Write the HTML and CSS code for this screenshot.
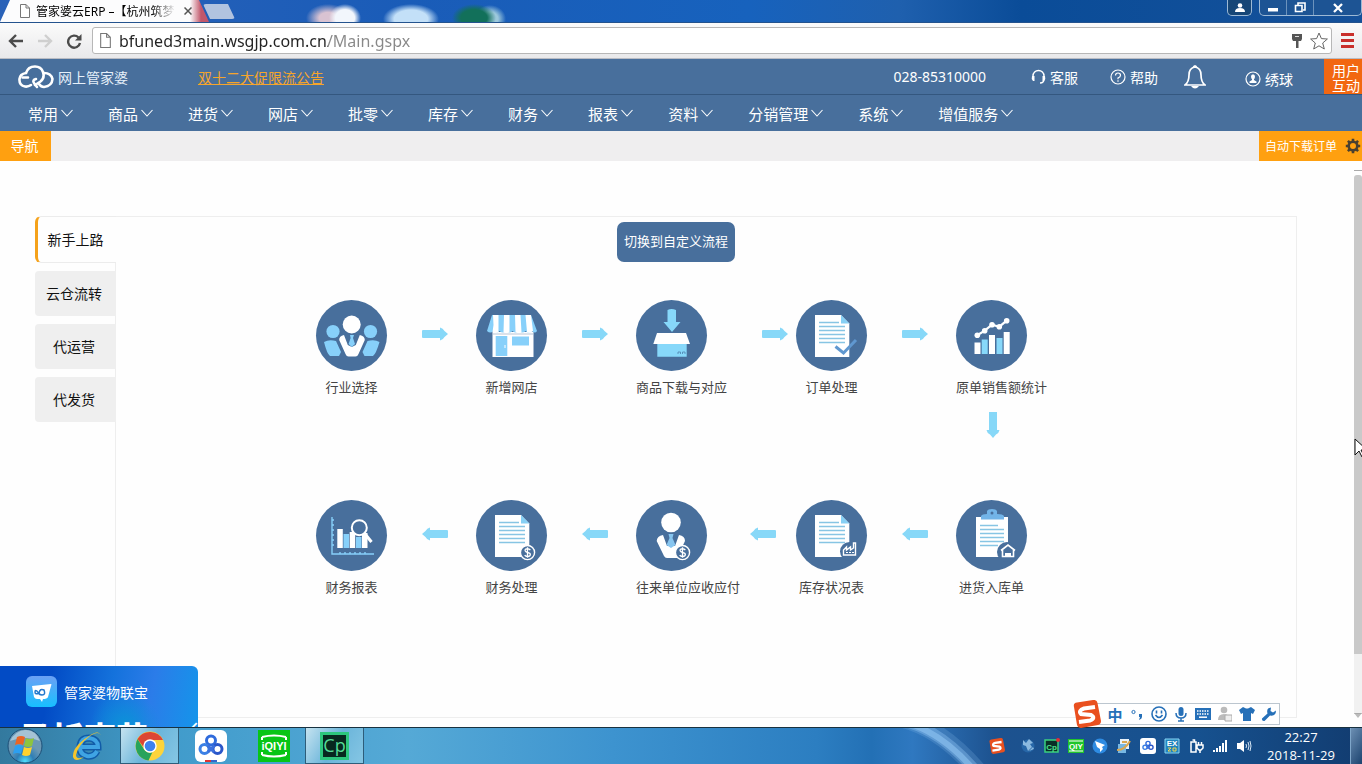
FILE: index.html
```html
<!DOCTYPE html>
<html lang="zh-CN">
<head>
<meta charset="utf-8">
<title>管家婆云ERP</title>
<link rel="stylesheet" href="styles.css">
</head>
<body>
<svg class="defs" aria-hidden="true">
  <symbol id="chev" viewBox="0 0 12 8"><path d="M.5 1 6 7 11.500 1" fill="none" stroke="currentColor" stroke-width="1.100"/></symbol>
  <symbol id="arrow" viewBox="0 0 26 14"><path d="M1 3h17V.5q3 .5 4.500 3.500L26 7l-3.500 3Q21 13 18 13.500V11H1Q0 11 0 10V4q0-1 1-1z" fill="#87d8f8"/></symbol>
  <symbol id="page" viewBox="0 0 10 14"><path d="M.5.5h5.500l3.500 3.500v9.500h-9zM6 .5V4h3.500" fill="#fff" stroke="#777"/></symbol>
  <symbol id="sogou" viewBox="0 0 28 28"><path d="M1 7Q0 3 4 2.500L20 0q4-.5 4.500 3L28 21q0 3-3 4L8 28q-3 0-4-3z" fill="#e9501f"/><path d="M22 7 11 8.500q-6 2-3 5.500l10 1q5 3-1 5.500L6 22" fill="none" stroke="#fff" stroke-width="4"/></symbol>
  <symbol id="cloud3" viewBox="0 0 26 22"><g fill="none" stroke-width="3"><circle cx="13" cy="6.500" r="4.500" stroke="#2f6bdc"/><circle cx="6.500" cy="15" r="4.500" stroke="#3b80e5"/><circle cx="19.500" cy="15" r="4.500" stroke="#2b57c9"/><path d="m9.500 11.500 6.500 6.500m.500-6.500L10 18" stroke="#3b70dd"/></g></symbol>
  <symbol id="doc" viewBox="0 0 71 71"><path d="M19 15h26l8.300 8.500V57H19z" fill="#fff"/><path d="M45 15v8.500h8.300z" fill="#87d0f5"/><path d="M23 22.500h20M23 26.500h26M23 30.500h26M23 34.500h26M23 38.500h26M23 42.500h26" stroke="#87c5e4" stroke-width="1.300"/></symbol>
  <symbol id="coin" viewBox="0 0 18 18"><circle cx="9" cy="9" r="7.500" fill="#486f9c" stroke="#fff" stroke-width="1.500"/><path d="M12 6.500Q11 5 9 5 6 5 6.500 7.200 7 8.500 9 9q3 .5 3 2.200 0 2-3 2-2 0-3-1.500M9 3.500v11" fill="none" stroke="#fff" stroke-width="1.400"/></symbol>
</svg>

<header class="titlebar">
  <div class="tab"><svg class="tab-page"><use href="#page"/></svg><span class="tab-title">管家婆云ERP –【杭州筑梦</span><button class="tab-close" aria-label="关闭标签页"><svg viewBox="0 0 8 8" width="8" height="8"><path d="m.5.5 7 7m0-7-7 7" stroke="#555" stroke-width="1.500"/></svg></button></div>
  <button class="new-tab" aria-label="新标签页"></button>
  <div class="win">
    <button class="win-user" aria-label="用户"><svg viewBox="0 0 12 10" width="12" height="10"><circle cx="6" cy="2.500" r="2.300" fill="#fff"/><path d="M1 9q0-4 5-4t5 4z" fill="#fff"/></svg></button>
    <div class="win-group">
      <button aria-label="最小化"><svg viewBox="0 0 12 10" width="12" height="10"><path d="M1 5h10v3.500H1z" fill="#fff"/></svg></button>
      <button aria-label="还原"><svg viewBox="0 0 12 11" width="12" height="11"><path d="M4 3V1h7v7H9M1.500 3.500H8v6H1.500z" fill="none" stroke="#fff" stroke-width="1.600"/></svg></button>
      <button class="win-x" aria-label="关闭"><svg viewBox="0 0 12 10" width="12" height="10"><path d="m2 1 8 8m0-8L2 9" stroke="#fff" stroke-width="2.300"/></svg></button>
    </div>
  </div>
</header>

<div class="toolbar">
  <button aria-label="后退"><svg viewBox="0 0 16 14" width="16" height="14"><path d="M15 7H2m6-6L2 7l6 6" fill="none" stroke="#4b4b4b" stroke-width="2.400"/></svg></button>
  <button aria-label="前进"><svg viewBox="0 0 16 14" width="16" height="14"><path d="M1 7h13M8 1l6 6-6 6" fill="none" stroke="#cfcfcf" stroke-width="2.400"/></svg></button>
  <button aria-label="刷新"><svg viewBox="0 0 16 16" width="16" height="16"><path d="M12.500 4.500A6 6 0 1 0 14 10" fill="none" stroke="#4b4b4b" stroke-width="2.400"/><path d="M15.500 1v6.500H9z" fill="#4b4b4b"/></svg></button>
  <div class="address">
    <svg class="addr-page"><use href="#page"/></svg>
    <input class="url" type="text" aria-label="地址" value="bfuned3main.wsgjp.com.cn/Main.gspx">
    <svg viewBox="0 0 10 14" width="10" height="14"><path d="M0 0h10v5L9 7H6.500v7H4V7H1L0 5z" fill="#555"/><path d="M3 2.500h4" stroke="#ddd"/></svg>
    <svg viewBox="0 0 18 18" width="18" height="18"><path d="m9 1 2.400 5.600 6 .4-4.700 4 1.600 6L9 13.800 3.700 17l1.600-6L.6 7l6-.4z" fill="#fff" stroke="#666"/></svg>
  </div>
  <button class="menu" aria-label="菜单"><i></i><i></i><i></i></button>
</div>

<div class="topbar">
  <svg viewBox="0 0 36 24" width="36" height="24"><g fill="none" stroke="#fff" stroke-width="2.600" stroke-linecap="round"><path d="M13 20q-3 2-6 1.500Q1 20.500 1.500 14 2 9 8 8q2-6.500 9-6.500 6 0 8 5.500 2 6-2.500 9.500L17 20"/><path d="M10 12.500H4.500M19 22l-3-4q-2-3 2-4M26 8q7 0 8.500 6-.5 7-8.500 8-3 0-5-3"/></g></svg>
  <span class="brand">网上管家婆</span>
  <a class="notice" href="#">双十二大促限流公告</a>
  <span class="phone">028-85310000</span>
  <a class="top-link service" href="#"><svg viewBox="0 0 15 16" width="15" height="16"><path d="M2 9V7a5.500 5.500 0 0 1 11 0v3q0 4-4 4" fill="none" stroke="#fff" stroke-width="1.400"/><path d="M1 7h2.500v5H2Q0 10 1 7zm10.500 0H14q1 3-1 5h-1.500z" fill="#fff"/></svg>客服</a>
  <a class="top-link help" href="#"><svg viewBox="0 0 16 16" width="16" height="16"><g fill="none" stroke="#fff" stroke-width="1.200"><circle cx="8" cy="8" r="7"/><path d="M5.500 6.500Q5.500 4 8 4t2.500 2.200Q10.500 8 8 9v1.200M8 11.300v1.400"/></g></svg>帮助</a>
  <button class="bell" aria-label="消息"><svg viewBox="0 0 22 26" width="22" height="26"><path d="M11 3Q5 4 5 11q0 7-4 10h20q-4-3-4-10 0-7-6-8z" fill="none" stroke="#fff" stroke-width="1.700"/><path d="M8 4q3-6 6 0M7 22q4 5 8 0z" fill="#fff"/></svg></button>
  <a class="top-link user" href="#"><svg viewBox="0 0 16 16" width="16" height="16"><circle cx="8" cy="8" r="7" fill="none" stroke="#fff" stroke-width="1.200"/><ellipse cx="8" cy="5.800" rx="2" ry="2.500" fill="#fff"/><path d="M4.500 12v-1.500Q6 9.500 7 9V8h2v1q1 .5 2.500 1.500V12z" fill="#fff"/></svg>绣球</a>
  <a class="interact" href="#"><span>用户</span><span>互动</span></a>
</div>

<nav class="nav">
  <a href="#">常用<svg><use href="#chev"/></svg></a>
  <a href="#">商品<svg><use href="#chev"/></svg></a>
  <a href="#">进货<svg><use href="#chev"/></svg></a>
  <a href="#">网店<svg><use href="#chev"/></svg></a>
  <a href="#">批零<svg><use href="#chev"/></svg></a>
  <a href="#">库存<svg><use href="#chev"/></svg></a>
  <a href="#">财务<svg><use href="#chev"/></svg></a>
  <a href="#">报表<svg><use href="#chev"/></svg></a>
  <a href="#">资料<svg><use href="#chev"/></svg></a>
  <a href="#">分销管理<svg><use href="#chev"/></svg></a>
  <a href="#">系统<svg><use href="#chev"/></svg></a>
  <a href="#">增值服务<svg><use href="#chev"/></svg></a>
</nav>

<div class="tabs">
  <button class="nav-tab">导航</button>
  <button class="auto">自动下载订单<svg viewBox="0 0 16 16" width="16" height="16"><circle cx="8" cy="8" r="4.300" fill="none" stroke="#4a4030" stroke-width="2.600"/><path d="M8 .8v2.700m0 9v2.700M.8 8h2.700m9 0h2.700M2.900 2.900l2 2m6.200 6.200 2 2m0-10.200-2 2m-6.200 6.200-2 2" stroke="#4a4030" stroke-width="2.600"/></svg></button>
</div>

<main class="main">
  <div class="side">
    <button class="side-tab active">新手上路</button>
    <button class="side-tab">云仓流转</button>
    <button class="side-tab">代运营</button>
    <button class="side-tab">代发货</button>
  </div>
  <section class="panel">
    <div class="flow">
      <button class="switch">切换到自定义流程</button>
      <div class="row">
        <a class="node" href="#"><svg class="disc" viewBox="0 0 71 71"><circle cx="17" cy="31.500" r="6.600" fill="#87d0fa"/><circle cx="54.500" cy="31.500" r="6.600" fill="#87d0fa"/><path d="M8 42q5-3 12-1l5 11-2 4H14q-3-2-6-14zM63.500 42q-5-3-12-1l-5 11 2 4H57q3-2 6.500-14z" fill="#87d0fa"/><circle cx="35.700" cy="24.500" r="9" fill="#fff"/><path d="M28 35q-5 1-4.800 5l6.300 14q1 2.500 3 2.500h7q2 0 3-2.500l6.300-14q0-4-5-5l-4 10-4 2-4-2z" fill="#fff"/><path d="M34 35h4l-1 3 2 6-3.200 3-3.200-3 2-6z" fill="#87d0fa"/></svg><span>行业选择</span></a>
        <svg class="arrow"><use href="#arrow"/></svg>
        <a class="node" href="#"><svg class="disc" viewBox="0 0 71 71"><path d="M16.500 32h41v25h-41z" fill="#fff"/><path d="M16 15h39l6 16q-2 3-5 0-3 3-6.500 0-3 3-6.500 0-3 3-6.500 0-3 3-6.500 0-3 3-6.500 0-3 3-6 0-3 3-6.500 0z" fill="#87d0fa"/><path d="M17 15h5.500v17q-3 2-6 0l1-7zm11 0h5.500v17q-3 2-6 0zm11 0h5.500l1 17q-3 2-6 0zm10.500 0H55l2 16q-3 3-6 1z" fill="#fff"/><path d="M19.700 36h11.600v20H19.700zM36 36.500h17v9H36z" fill="#87d0fa"/><path d="M17 34h40" stroke="#b9c5d5"/><path d="M29 45v3" stroke="#fff"/></svg><span>新增网店</span></a>
        <svg class="arrow"><use href="#arrow"/></svg>
        <a class="node" href="#"><svg class="disc" viewBox="0 0 71 71"><path d="M31.500 10q4-2 8.500 0v12h4.500L36 32l-8.500-10h4z" fill="#87d8fa"/><path d="M21.300 43h29.400v13.700H21.300z" fill="#87d8fa"/><path d="M21 33h29l4 11H17.300z" fill="#fff"/><path d="M42 54v-2h2.500v2m2 0v-2H49v2" fill="none" stroke="#4e83ad" stroke-width=".8"/></svg><span>商品下载与对应</span></a>
        <svg class="arrow far"><use href="#arrow"/></svg>
        <a class="node" href="#"><svg class="disc" viewBox="0 0 71 71"><use href="#doc" width="71" height="71"/><path d="m39.500 46.500 8 6.500 12.500-13" fill="none" stroke="#6098d0" stroke-width="3"/></svg><span>订单处理</span></a>
        <svg class="arrow"><use href="#arrow"/></svg>
        <a class="node" href="#"><svg class="disc" viewBox="0 0 71 71"><path d="M18.500 42.500h6V54h-6zM33 35h6v19h-6zM47.700 32h6v22h-6z" fill="#fff"/><path d="M25.700 39.500h6V54h-6zM40.500 38h6v16h-6z" fill="#87d8fa"/><path d="m21.300 35.300 7.400-4.600 7.300-6 7.300 2 7.400-6" fill="none" stroke="#fff" stroke-width="2.200"/><g fill="#fff"><circle cx="21.300" cy="35.300" r="2.800"/><circle cx="28.700" cy="30.700" r="2.800"/><circle cx="36" cy="24.700" r="2.800"/><circle cx="43.300" cy="26.700" r="2.800"/><circle cx="50.700" cy="20.700" r="2.800"/></g></svg><span>原单销售额统计</span></a>
      </div>
      <svg class="down" viewBox="0 0 14 26" width="14" height="26"><path d="M3 0v18H.5Q1 21 4 22.500L7 26l3-3.500q3-1.500 3.500-4.500H11V0z" fill="#87d8f8"/></svg>
      <div class="row">
        <a class="node" href="#"><svg class="disc" viewBox="0 0 71 71"><path d="M16 17v37h42M16 20h2m-2 5h2m-2 5h2m-2 5h2m-2 5h2m-2 5h2m6 9v-2m5 2v-2m5 2v-2m5 2v-2m5 2v-2m5 2v-2" fill="none" stroke="#87d0fa" stroke-width="1.400"/><path d="M21.300 29h5.500v19h-5.500zM33.700 32h5.500v16h-5.500zM46 33h5.500v15H46z" fill="#fff"/><path d="M27.500 34H33v14h-5.500zM40 37h5.500v11H40z" fill="#87d0fa"/><circle cx="43.300" cy="27.700" r="7.500" fill="#486f9c" stroke="#fff" stroke-width="2"/><path d="m49 34 6.500 8" stroke="#fff" stroke-width="3"/></svg><span>财务报表</span></a>
        <svg class="arrow back"><use href="#arrow"/></svg>
        <a class="node" href="#"><svg class="disc" viewBox="0 0 71 71"><use href="#doc" width="71" height="71"/><use href="#coin" x="43" y="44" width="17" height="17"/></svg><span>财务处理</span></a>
        <svg class="arrow back"><use href="#arrow"/></svg>
        <a class="node" href="#"><svg class="disc" viewBox="0 0 71 71"><circle cx="35" cy="22.500" r="9.800" fill="#fff"/><path d="M27 35q-6 1-6.300 6L28 56q1 2 3 2h10l8-17q0-5-6-6l-4 11h-8z" fill="#fff"/><path d="M32.500 34h5l-1 4 3 7-4.500 3-4.500-3 3-7z" fill="#87c5ef"/><use href="#coin" x="38" y="44" width="17" height="17"/></svg><span>往来单位应收应付</span></a>
        <svg class="arrow back near"><use href="#arrow"/></svg>
        <a class="node" href="#"><svg class="disc" viewBox="0 0 71 71"><use href="#doc" width="71" height="71"/><circle cx="53.500" cy="51.500" r="9.500" fill="#486f9c"/><path d="M47.500 55v-5l3-3v3l4-3v3l3-2v-5h2v12z" fill="none" stroke="#fff" stroke-width="1.400"/><path d="M50 52.500h8" stroke="#fff" stroke-dasharray="2 1"/></svg><span>库存状况表</span></a>
        <svg class="arrow back"><use href="#arrow"/></svg>
        <a class="node" href="#"><svg class="disc" viewBox="0 0 71 71"><path d="M20 17h32v40H20z" fill="#fff"/><path d="M25 16q1-2 6-2v-3q1-2 5-2t5 2v3q6 0 7 2v3.500H25z" fill="#72b4e8"/><circle cx="36" cy="13" r="1.500" fill="#486f9c"/><path d="M24 25.500h18M24 29.500h24M24 33.500h24M24 37.500h24M24 41.500h24M24 45.500h18" stroke="#87c5e4" stroke-width="1.300"/><circle cx="51" cy="52" r="10" fill="#486f9c"/><path d="M45 50.500 52 45l7 5.500M46.500 50v6.500h11V50" fill="none" stroke="#fff" stroke-width="1.600"/><path d="M49 53h6v3h-6z" fill="#fff"/></svg><span>进货入库单</span></a>
      </div>
    </div>
  </section>
  <div class="scroll" aria-hidden="true"><i class="cap"></i><i class="thumb"></i><i class="track"></i><i class="cap end"></i></div>
  <svg class="cursor" viewBox="0 0 14 20" width="14" height="20"><path d="M1 1v16l4-4 3 6 2-1-3-6h6z" fill="#fff" stroke="#111"/></svg>
  <aside class="promo">
    <div class="promo-head"><svg viewBox="0 0 31 31" width="31" height="31"><defs><linearGradient id="pg" x2="0" y2="1"><stop stop-color="#6ba0f5"/><stop offset="1" stop-color="#17c0ff"/></linearGradient></defs><rect width="31" height="31" rx="6" fill="url(#pg)"/><path d="m6 10 19-2q1 0 0 2l-3 11q-1 2-5 2l-1 3-2-3H11q-2 0-3-2z" fill="#fff"/><path d="M12 16q-3-3-3 0t4 1q1-5 5-3 2 5-2 5-3 0-4-3" fill="none" stroke="#2478cc" stroke-width="1.500"/></svg>管家婆物联宝</div>
    <div class="promo-big"><span>马折李花</span><span>／</span></div>
  </aside>
  <div class="ime">
    <svg class="ime-logo"><use href="#sogou"/></svg>
    <button class="zh">中</button>
    <button aria-label="标点"><svg viewBox="0 0 14 14" width="14" height="14"><circle cx="3.500" cy="5" r="1.600" fill="none" stroke="#2670b8"/><path d="M9 7h3v3q0 2-3 3l1-3H9z" fill="#2670b8"/></svg></button>
    <button aria-label="表情"><svg viewBox="0 0 16 16" width="16" height="16"><g fill="none" stroke="#2670b8" stroke-width="1.600"><circle cx="8" cy="8" r="7"/><path d="M4.500 9q3.500 5 7 0M5.500 4.500v3m5-3v3"/></g></svg></button>
    <button aria-label="语音"><svg viewBox="0 0 14 16" width="14" height="16"><rect x="4.500" y="1" width="5" height="9" rx="2.500" fill="#2670b8"/><path d="M2 7q0 5 5 5t5-5M7 12v3m-3 0h6" fill="none" stroke="#2670b8" stroke-width="1.500"/></svg></button>
    <button aria-label="键盘"><svg viewBox="0 0 16 12" width="16" height="12"><rect width="16" height="12" fill="#2670b8"/><path d="M2 3h12M2 6h12" stroke="#fff" stroke-width="1.500" stroke-dasharray="1.500 1"/><path d="M4 9.200h8" stroke="#fff" stroke-width="1.500"/></svg></button>
    <button aria-label="账户"><svg viewBox="0 0 14 16" width="14" height="16"><circle cx="6" cy="4" r="3.300" fill="#bbb"/><path d="M0 14q0-6 6-6t6 6z" fill="#bbb"/><path d="M7 9h7v6H7z" fill="#eee" stroke="#aaa"/></svg></button>
    <button aria-label="皮肤"><svg viewBox="0 0 16 14" width="16" height="14"><path d="m4 0 2 1q2 1 4 0l2-1 4 3-2 4-2-1v8H4V6L2 7 0 3z" fill="#2670b8"/></svg></button>
    <button aria-label="工具"><svg viewBox="0 0 16 16" width="16" height="16"><path d="M15 4.500 12 6.500l-2.500-1.500L10 1.500Q5 2 6.500 7.500l-5.500 5q-.5 3 2.500 2.500L9 9.500q6 1 6-5z" fill="#2670b8"/></svg></button>
  </div>
</main>

<footer class="taskbar">
  <svg class="streak" viewBox="0 0 120 37" width="120" height="37" aria-hidden="true"><g fill="none" stroke="#8fc4f2" stroke-linecap="round"><path d="M-5-12Q45-12 92 42" stroke-width="18" opacity=".2"/><path d="M-5-10Q45-10 90 42" stroke-width="11" opacity=".4"/><path d="M-5-9Q45-9 89 42" stroke-width="6" opacity=".6"/></g></svg>
  <button class="start" aria-label="开始"><svg viewBox="0 0 38 36" width="38" height="36"><defs><radialGradient id="orb" cy=".95"><stop stop-color="#4fe0ff"/><stop offset=".5" stop-color="#2f7eb4"/><stop offset="1" stop-color="#6a98b5"/></radialGradient></defs><circle cx="19" cy="18" r="17" fill="url(#orb)" stroke="#1d4f77"/><path d="M4 13Q9 3 19 2t15 11q-14-6-30 0z" fill="#d5e7ef" opacity=".55"/><path d="M11 9q4-2 8 0l-2 8q-4-2-8 0z" fill="#ec6423"/><path d="M20 10q4 2 8 0l-2 8q-4 2-8 0z" fill="#8dc53e"/><path d="M9 18q4-2 8 0l-2 8q-4-2-8 0z" fill="#2c9ff0"/><path d="M18 19q4 2 8 0l-2 8q-4 2-8 0z" fill="#ffd22e"/></svg></button>
  <button class="task" aria-label="Internet Explorer"><svg viewBox="0 0 34 32" width="34" height="32"><path d="M27 21q-3 6-10 5-8-2-7-10Q11 8 19 8q9 1 9 9H12" fill="none" stroke="#115ca8" stroke-width="7"/><path d="M27 21q-3 6-10 5-8-2-7-10Q11 8 19 8q9 1 9 9H12" fill="none" stroke="#3fa4e4" stroke-width="4"/><path d="M31 6Q29-1 19 6 2 17 3 27q2 6 11 0-8 3-8-2Q8 15 20 6q9-6 11 0z" fill="#f5c52b"/></svg></button>
  <button class="task open" aria-label="Chrome"><svg viewBox="0 0 30 30" width="30" height="30"><circle cx="15" cy="15" r="14.500" fill="#fdd43b"/><path d="M2.500 8A14.500 14.500 0 0 1 28 9H15a6 6 0 0 0-5 9z" fill="#dc4634"/><path d="M2.500 8 9.500 19q3 4 8 2l-4 8.500A14.500 14.500 0 0 1 2.500 8z" fill="#27a35b"/><circle cx="15" cy="15" r="6.700" fill="#fff"/><circle cx="15" cy="15" r="5.300" fill="#3e81ee"/></svg></button>
  <button class="task" aria-label="百度网盘"><svg viewBox="0 0 32 32" width="32" height="32"><rect width="32" height="32" rx="6" fill="#fff"/><use href="#cloud3" x="3" y="4" width="26" height="22"/><path d="M10 30h6v2h-6z" fill="#d33"/><path d="M16 30h6v2h-6z" fill="#36c"/></svg></button>
  <button class="task" aria-label="爱奇艺"><svg viewBox="0 0 32 32" width="32" height="32"><rect width="32" height="32" fill="#08c515"/><path d="M4 7q12-3 24 0m-24 18q12 3 24 0M4 7v3m24-3v3M4 25v-3m24 3v-3" fill="none" stroke="#fff" stroke-width="2"/><text x="16" y="20" text-anchor="middle" class="qiyi">iQIYI</text></svg></button>
  <button class="task open" aria-label="Captivate"><span class="cp">Cp</span></button>
  <div class="tray">
    <svg viewBox="0 0 28 28" width="16" height="16"><use href="#sogou"/></svg>
    <svg class="gap" viewBox="0 0 16 16" width="16" height="16"><circle cx="8" cy="8" r="6.500" fill="#2767a8"/><path d="m3 2 3 3 3-4 4 4-3 1 2 3-4 4-2-5-3-1zM9 13l4-4 1 2z" fill="#8bb9df"/></svg>
    <svg viewBox="0 0 16 16" width="16" height="16"><path d="M1 2h13v12H1z" fill="#092f27" stroke="#3bd17f" stroke-width="1.500"/><text x="7.500" y="11.500" text-anchor="middle" class="mini">Cp</text><circle cx="14" cy="2" r="2" fill="#e32d36"/></svg>
    <svg viewBox="0 0 16 16" width="16" height="16"><path d="M0 1h16v14H0z" fill="#20c52b"/><path d="M1 3h14M1 13h14" stroke="#fff"/><text x="8" y="11" text-anchor="middle" class="mini white">QIY</text></svg>
    <svg viewBox="0 0 16 16" width="16" height="16"><circle cx="8" cy="8" r="7.500" fill="#2e8be2"/><path d="m3 3 10 4-3 2 1 2-3 3v-3L5 9z" fill="#fff"/></svg>
    <svg viewBox="0 0 16 16" width="16" height="16"><path d="M4 1h9v10H4z" fill="#e9f2f9"/><path d="M2 6h8v9H2z" fill="#77b7e2"/><path d="M1 12Q9 12 14 3M6 4h5" fill="none" stroke="#d9a64e" stroke-width="2"/></svg>
    <svg viewBox="0 0 16 16" width="16" height="16"><rect width="16" height="16" rx="3" fill="#fff"/><use href="#cloud3" x="2" y="2" width="12" height="11"/></svg>
    <svg viewBox="0 0 16 16" width="16" height="16"><path d="M1 1h14v14H1z" fill="#2184bd" stroke="#8ad7f4"/><text x="8" y="8" text-anchor="middle" class="mini white">EX</text><path d="M4 10h3l-3 3h3m2-3h3v3H9z" stroke="#efd552" fill="none"/></svg>
    <svg viewBox="0 0 16 16" width="16" height="16"><path d="M3 4h5v10H3zM4.500 2h2v2M9 7h6v3l-2 2h-2l-2-2zM10.500 4v3m3-3v3M12 12v3" fill="none" stroke="#fff" stroke-width="1.500"/></svg>
    <svg viewBox="0 0 16 16" width="16" height="16"><path d="M1 12h2v2H1zm3-2h2v4H4zm3-2h2v6H7zm3-3h2v9h-2zm3-3h2v12h-2z" fill="#fff"/></svg>
    <svg viewBox="0 0 16 16" width="16" height="16"><path d="M1 5h3l4-3v12l-4-3H1z" fill="#fff"/><path d="M10 6q1 2 0 4m2-6q2 4 0 8m2-9q2 5 0 10" fill="none" stroke="#d7e7f5"/></svg>
  </div>
  <time class="clock"><span>22:27</span><span>2018-11-29</span></time>
  <button class="peek" aria-label="显示桌面"></button>
</footer>
</body>
</html>
```
FILE: styles.css
```css
* { box-sizing: border-box; }
body {
  margin: 0;
  height: 100vh;
  display: flex;
  flex-direction: column;
  overflow: hidden;
  background: #fff;
  font-family: "Noto Sans", "Noto Sans CJK SC", sans-serif;
  font-size: 14px;
}
button { border: 0; padding: 0; background: none; font: inherit; color: inherit; display: flex; align-items: center; justify-content: center; }
a { color: inherit; text-decoration: none; }
svg { flex: none; display: block; }
.defs { position: absolute; width: 0; height: 0; }

/* browser frame */
.titlebar {
  flex: none;
  height: 23px;
  display: flex;
  background:
    radial-gradient(ellipse 16px 14px at 345px 18px, #f2f6fc 60%, transparent),
    radial-gradient(ellipse 22px 14px at 328px 18px, #d9c3d2 40%, transparent),
    radial-gradient(ellipse 28px 15px at 411px 19px, #c3e0f8 60%, transparent),
    radial-gradient(ellipse 22px 14px at 474px 18px, #12705a 60%, transparent),
    radial-gradient(ellipse 16px 14px at 490px 19px, #9cc8dc 50%, transparent),
    linear-gradient(90deg, #2a62b8, #1a5cb8 30%, #1762bd 55%, #1f60ae 66%, #0a4c98 75%, #15519a);
  border-bottom: 1px solid #24538e;
}
.tab {
  width: 209px;
  display: flex;
  align-items: center;
  padding-left: 20px;
  background: linear-gradient(90deg, #fcfcfd 190px, #c2576b 201px);
  clip-path: polygon(10px 0, 199px 0, 209px 100%, 0 100%);
  font-size: 12px;
}
.tab-page { width: 10px; height: 14px; margin-right: 6px; }
.tab-title {
  width: 142px;
  overflow: hidden;
  white-space: nowrap;
  mask-image: linear-gradient(90deg, #000 115px, transparent 140px);
}
.tab-close { width: 20px; height: 20px; }
.new-tab {
  width: 32px;
  height: 15px;
  margin-top: 4px;
  margin-left: -6px;
  background: #b1c3df;
  border-radius: 3px;
  clip-path: polygon(0 0, 25px 0, 32px 100%, 7px 100%);
}
.win { margin-left: auto; display: flex; gap: 7px; height: 16px; }
.win-user, .win-group { border: 1px solid #9db9d5; border-top: 0; border-radius: 0 0 5px 5px; }
.win-user { width: 25px; background: #164677; }
.win-group { display: flex; background: #1d5494; }
.win-group button { width: 27px; border-right: 1px solid #6c93bd; }
.win-group .win-x { width: 47px; border-right: 0; }
.toolbar {
  flex: none;
  height: 36px;
  display: flex;
  align-items: center;
  gap: 13px;
  padding: 0 8px;
  background: linear-gradient(#fbfbfb, #e9e9eb);
  border-bottom: 1px solid #b9bcc4;
}
.address {
  flex: 1;
  height: 27px;
  margin-left: -3px;
  margin-right: -4px;
  display: flex;
  align-items: center;
  gap: 8px;
  padding: 0 3px 0 7px;
  background: #fff;
  border: 1px solid #b7b7b7;
  border-radius: 3px;
}
.addr-page { width: 11px; height: 15px; }
.url {
  flex: 1;
  min-width: 0;
  border: 0;
  padding: 0;
  outline: 0;
  font: 16px "Noto Sans", sans-serif;
  color: transparent;
  background: linear-gradient(90deg, #222 209px, #888 209px);
  background-clip: text;
}
.menu { flex-direction: column; gap: 3px; }
.menu i { width: 13px; height: 3px; background: #c9302c; }

/* application header */
.topbar {
  flex: none;
  height: 36px;
  display: flex;
  align-items: center;
  padding-left: 18px;
  background: #486f9c;
  border-bottom: 1px solid #34577f;
  color: #fff;
}
.brand { margin-left: 4px; color: #e6f0fa; }
.notice { margin-left: 70px; color: #f5a52c; text-decoration: underline; }
.phone { margin-left: auto; }
.top-link { display: flex; align-items: center; gap: 4px; }
.service { margin-left: 45px; }
.help { margin-left: 32px; }
.bell { margin-left: 26px; }
.user { margin-left: 39px; padding-top: 4px; }
.interact {
  margin-left: 31px;
  width: 38px;
  height: 35px;
  padding: 4px 0 0 8px;
  background: #f26711;
  line-height: 15px;
}
.interact span { display: block; }
.nav {
  flex: none;
  height: 36px;
  display: flex;
  align-items: center;
  gap: 35px;
  padding-left: 28px;
  background: #486f9c;
  color: #fff;
  font-size: 15px;
}
.nav a { display: flex; align-items: center; gap: 3px; white-space: nowrap; }
.nav svg { width: 12px; height: 8px; }
.tabs {
  flex: none;
  height: 30px;
  display: flex;
  justify-content: space-between;
  background: #efeeef;
  color: #fff;
}
.nav-tab { width: 51px; padding: 0 2px 2px 0; background: #ffa010; }
.auto { gap: 8px; padding: 0 1px 0 6px; background: #ffa010; font-size: 12px; }

/* workspace */
.main {
  flex: 1;
  min-height: 0;
  position: relative;
  display: flex;
  padding: 55px 0 9px 35px;
  background: #fefefe;
}
.side { width: 81px; display: flex; flex-direction: column; gap: 8px; z-index: 1; }
.side-tab { height: 45px; padding: 0 3px 2px 0; background: #efefef; border-radius: 4px 0 0 4px; color: #111; }
.active {
  height: 47px;
  background: #fefefe;
  border: 1px solid #ececec;
  border-left: 3px solid #f5a21b;
  border-right: 0;
  border-radius: 6px 0 0 6px;
}
.panel {
  flex: 1;
  min-width: 0;
  margin-left: -1px;
  padding: 5px 0 0 200px;
  border: 1px solid #eee;
}
.flow { width: 720px; display: flex; flex-direction: column; align-items: center; }
.switch {
  height: 40px;
  margin-bottom: 38px;
  padding: 0 7px 4px;
  background: #486f9c;
  border-radius: 7px;
  color: #fff;
  font-size: 13px;
}
.row { align-self: flex-start; display: flex; }
.node { width: 71px; color: #444; font-size: 13px; line-height: 20px; text-align: center; white-space: nowrap; }
.node span { display: block; margin: 6px 0 1px; }
.disc { width: 71px; height: 71px; border-radius: 50%; background: #486f9c; }
.arrow { width: 26px; height: 14px; margin: 27px 28px 0 35px; }
.arrow.far { margin-left: 55px; margin-right: 8px; }
.arrow.near { margin-left: 43px; margin-right: 20px; }
.arrow.back { transform: scaleX(-1); }
.down { align-self: flex-end; margin: 14px 36px 62px 0; }
.scroll { width: 8px; margin: -46px 0 0 57px; display: flex; flex-direction: column; align-items: center; }
.scroll .cap { width: 8px; height: 5px; border-top: 1px solid #aaa; }
.scroll .cap.end { background: #bbb; clip-path: polygon(0 0, 100% 0, 50% 100%); }
.thumb { flex: 480; width: 8px; background: #c9c9c9; border-radius: 3px 3px 0 0; }
.track { flex: 59; width: 8px; background: #f1f1f1; }
.cursor { position: absolute; right: -6px; top: 277px; z-index: 3; }

/* floating layers */
.promo {
  position: absolute;
  left: 0;
  bottom: 0;
  z-index: 2;
  width: 198px;
  height: 61px;
  padding: 10px 0 0 20px;
  overflow: hidden;
  border-radius: 0 6px 0 0;
  background: radial-gradient(circle at 125px 60px, #0a93d8, transparent 35px), linear-gradient(100deg, #024bc5 25%, #1472dc 55%, #2b7ce9 75%, #1495ea);
  color: #fff;
}
.promo-head { display: flex; align-items: center; gap: 7px; padding-left: 6px; }
.promo-big { display: flex; justify-content: space-between; margin-top: 11px; font-size: 32px; font-weight: 900; line-height: 40px; white-space: nowrap; }
.ime {
  position: absolute;
  right: 82px;
  bottom: 2px;
  z-index: 2;
  height: 22px;
  display: flex;
  align-items: center;
  gap: 6px;
  padding-right: 2px;
  background: #fff;
  border: 1px solid #bcc6cf;
}
.ime button { width: 16px; }
.ime-logo { width: 28px; height: 28px; margin-left: -14px; }
.zh { color: #2670b8; font-weight: 700; font-size: 15px; }

/* desktop taskbar */
.taskbar {
  flex: none;
  height: 37px;
  position: relative;
  display: flex;
  align-items: stretch;
  border-top: 1px solid #18313f;
  background: linear-gradient(90deg, #33799e, #409bcb 12%, #55a9d6 30%, #3d93cf 45%, #2c7ec1 60%, #2370b5 64%, #2f78c0 67%, #1d528f 73%, #16518f 88%, #123c70);
  color: #fff;
}
.streak { position: absolute; left: 65%; top: 0; overflow: hidden; }
.start { width: 50px; }
.task { width: 62px; }
.start + .task { width: 70px; padding-left: 3px; }
.task.open {
  width: 59px;
  border: 1px solid #2d5d7a;
  border-top: 0;
  background: linear-gradient(120deg, #c5e3f0, #6bb5da 50%, #85c6e4);
}
.open + .task { width: 64px; }
.cp {
  width: 29px;
  height: 28px;
  border: 3px solid #2cc67d;
  background: #07281f;
  color: #55db97;
  font: 18px/21px "Open Sans", sans-serif;
}
.qiyi { font: 700 11px "Liberation Sans", sans-serif; fill: #fff; }
.mini { font: 700 8px "Liberation Sans", sans-serif; fill: #4de18f; }
.mini.white { fill: #fff; }
.tray { margin-left: auto; display: flex; align-items: center; gap: 8px; }
.tray .gap { margin-left: 7px; }
.clock {
  width: 98px;
  display: flex;
  flex-direction: column;
  align-items: center;
  justify-content: center;
  font: 13px/18px "Open Sans", sans-serif;
}
.peek { width: 12px; border-left: 1px solid #7fa6c9; background: linear-gradient(120deg, #6c8fb3, #1c436f); }
```
